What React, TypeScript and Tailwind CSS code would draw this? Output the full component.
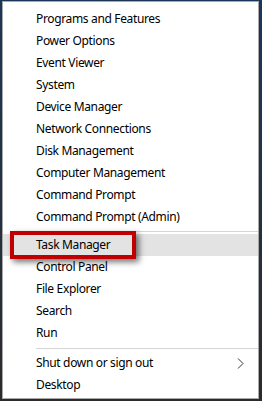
const groups = [
  [
    "Programs and Features",
    "Power Options",
    "Event Viewer",
    "System",
    "Device Manager",
    "Network Connections",
    "Disk Management",
    "Computer Management",
    "Command Prompt",
    "Command Prompt (Admin)",
  ],
  ["Task Manager", "Control Panel", "File Explorer", "Search", "Run"],
  ["Shut down or sign out", "Desktop"],
]

function Item({ label, active, arrow }: { label: string; active?: boolean; arrow?: boolean }) {
  return (
    <div className={`h-[22px] pl-[33px] pr-[10px] flex items-center justify-between ${active ? "bg-[#e3e3e3]" : ""}`}>
      <span>{label}</span>
      {arrow && (
        <svg width="7" height="11" viewBox="0 0 7 11" className="mr-[4px]">
          <polyline points="1,0.5 6,5.5 1,10.5" fill="none" stroke="#333" strokeWidth="1" />
        </svg>
      )}
    </div>
  )
}

export default function App() {
  return (
    <div className="relative w-[262px] h-[401px] bg-gradient-to-b from-[#1b3658] to-[#2b2b2b] pt-[1px] pl-[2px] pr-[3px] pb-[2px]">
      <div
        className="h-full bg-white border border-[#a8a8a8] pt-[6px] text-[12px] tracking-[-0.35px] text-black leading-none"
        style={{ fontFamily: '"Segoe UI", "Noto Sans", "Open Sans", sans-serif' }}
      >
        {groups.map((items, gi) => (
          <div key={gi}>
            {gi > 0 && (
              <div className={`${gi === 1 ? "h-[6px]" : "h-[8px]"} flex items-center`}>
                <div className="ml-[33px] flex-1 h-px bg-[#d5d5d5]" />
              </div>
            )}
            {items.map((label) => (
              <Item
                key={label}
                label={label}
                active={label === "Task Manager"}
                arrow={label === "Shut down or sign out"}
              />
            ))}
          </div>
        ))}
      </div>

      {/* red callout around Task Manager */}
      <div className="absolute left-[10px] top-[231px] w-[126px] h-[28px] border-[4px] border-[#c00000] shadow-[3px_3px_6px_rgba(0,0,0,0.55)]" />
    </div>
  )
}
